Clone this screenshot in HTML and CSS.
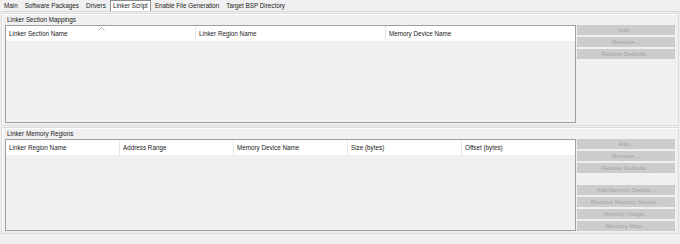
FILE: index.html
```html
<!DOCTYPE html>
<html lang="en">
<head>
  <meta charset="UTF-8">
  <title>Linker Script</title>
  <link rel="stylesheet" href="styles.css">
</head>
<body>
  <div class="tabs">
    <span class="tab">Main</span>
    <span class="tab">Software Packages</span>
    <span class="tab">Drivers</span>
    <span class="tab active">Linker Script</span>
    <span class="tab">Enable File Generation</span>
    <span class="tab">Target BSP Directory</span>
  </div>

  <div class="group">
    <div class="group-title">Linker Section Mappings</div>
    <div class="group-body">
      <div class="table table-sections">
        <div class="thead">
          <div class="th col-wide">Linker Section Name
            <svg class="sort" width="7" height="4" viewBox="0 0 7 4"><path d="M0.5 3.5 L3.5 0.5 L6.5 3.5" fill="none" stroke="#9a9a9a" stroke-width="0.8"/></svg>
          </div>
          <div class="th col-wide">Linker Region Name</div>
          <div class="th col-fill">Memory Device Name</div>
        </div>
      </div>
      <div class="buttons">
        <div class="btn">Add...</div>
        <div class="btn">Remove...</div>
        <div class="btn">Restore Defaults...</div>
      </div>
    </div>
  </div>

  <div class="group">
    <div class="group-title">Linker Memory Regions</div>
    <div class="group-body">
      <div class="table table-regions">
        <div class="thead">
          <div class="th col-mid">Linker Region Name</div>
          <div class="th col-mid">Address Range</div>
          <div class="th col-mid">Memory Device Name</div>
          <div class="th col-mid">Size (bytes)</div>
          <div class="th col-fill">Offset (bytes)</div>
        </div>
      </div>
      <div class="buttons">
        <div class="btn">Add...</div>
        <div class="btn">Remove...</div>
        <div class="btn">Restore Defaults...</div>
        <div class="btn spaced">Add Memory Device...</div>
        <div class="btn">Remove Memory Device...</div>
        <div class="btn">Memory Usage...</div>
        <div class="btn">Memory Map...</div>
      </div>
    </div>
  </div>
</body>
</html>
```

FILE: styles.css
```css
body { margin: 0; width: 680px; height: 244px; overflow: hidden; background: #f0f0f0; color: #1a1a1a; font: 6.3px "Liberation Sans", Arial, sans-serif; }
.tabs { display: flex; align-items: flex-end; height: 12px; padding-left: 1px; border-bottom: 1px solid #d9d9d9; box-sizing: border-box; }
.tab { padding: 0 2px; margin-right: 1px; line-height: 10px; border: 1px solid transparent; border-bottom: none; }
.tab.active { background: #fff; border-color: #8c8c8c; }
.group { margin: 1px 1px 0 1px; padding: 0 3px 2px 3px; border: 1px solid #dcdcdc; box-shadow: inset 1px 1px 0 #fff; }
.group-title { height: 11px; line-height: 11px; padding-left: 2px; }
.group-body { display: flex; align-items: flex-start; gap: 1px; }
.table { flex: 1; border: 1px solid #a0a0a0; background: #f0f0f0; }
.table-sections { height: 96px; }
.table-regions { height: 90px; }
.thead { display: flex; height: 15px; background: #fff; }
.th { position: relative; box-sizing: border-box; padding-left: 3px; line-height: 15px; border-right: 1px solid #e5e5e5; white-space: nowrap; }
.col-wide { width: 190px; }
.col-mid { width: 114px; }
.col-fill { flex: 1; border-right: none; }
.sort { position: absolute; left: 92px; top: 1px; }
.buttons { width: 98px; display: flex; flex-direction: column; gap: 2px; }
.btn { height: 10px; line-height: 10px; background: #cccccc; color: #a3a3a3; text-align: center; font-size: 6px; }
.btn.spaced { margin-top: 10px; }
```
